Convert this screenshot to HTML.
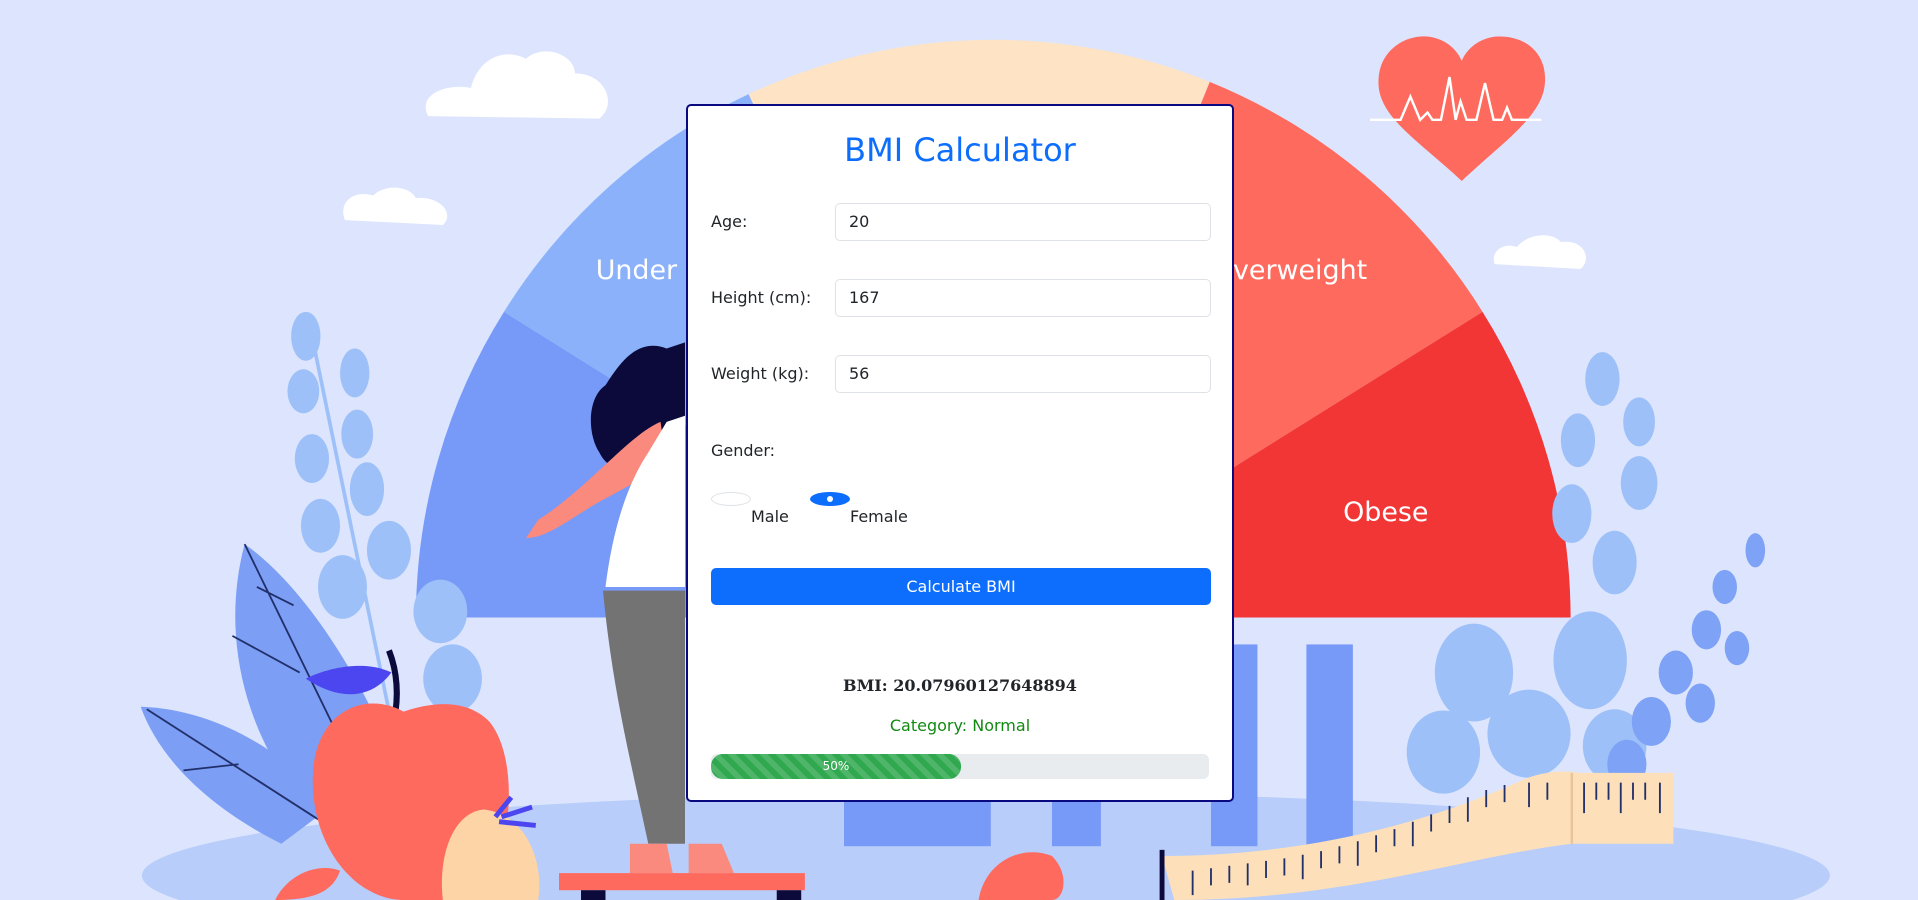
<!DOCTYPE html>
<html><head><meta charset="utf-8">
<style>
html,body{margin:0;padding:0;width:1918px;height:900px;overflow:hidden;background:#dce5fd;font-family:"DejaVu Sans",Verdana,sans-serif;position:relative;}
#bg{position:absolute;left:0;top:0;width:1918px;height:900px;display:block;}
.card{position:absolute;left:686px;top:104px;width:544px;height:694px;background:#fff;border:2px solid #0a0a80;border-radius:5px;}
.abs{position:absolute;}
h1{position:absolute;left:0;width:544px;top:24px;margin:0;text-align:center;font-weight:normal;font-size:32px;color:#0d6efd;line-height:40px;}
.lbl{position:absolute;left:23px;font-size:16px;color:#212529;line-height:20px;}
.inp{position:absolute;left:147px;border:1px solid #dee2e6;border-radius:5px;font-size:16px;color:#212529;line-height:36px;padding-left:13px;box-sizing:border-box;width:376px;height:38px;}
.radio{position:absolute;width:40px;height:14px;border-radius:50%;box-sizing:border-box;}
.btn{position:absolute;left:23px;top:462px;width:500px;height:37px;background:#0d6efd;border-radius:5px;color:#fff;text-align:center;font-size:16px;line-height:37px;}
.bmi{position:absolute;left:0;width:544px;text-align:center;top:570px;font-family:"DejaVu Serif",serif;font-weight:bold;font-size:16px;color:#212529;}
.cat{position:absolute;left:0;width:544px;text-align:center;top:610px;font-size:16px;color:#128a12;}
.prog{position:absolute;left:23px;top:648px;width:498px;height:25px;background:#e9ecef;border-radius:6px;overflow:hidden;}
.bar{width:250px;height:25px;border-radius:12px;background-color:#2fa84f;background-image:linear-gradient(45deg,rgba(255,255,255,.15) 25%,transparent 25%,transparent 50%,rgba(255,255,255,.15) 50%,rgba(255,255,255,.15) 75%,transparent 75%,transparent);background-size:16px 16px;color:#fff;font-size:12px;text-align:center;line-height:25px;}
</style></head><body>
<svg id="bg" viewBox="0 0 1568 736" preserveAspectRatio="none">
 <ellipse cx="806" cy="716" rx="690" ry="68" fill="#b8cdf9"/>
 <path d="M812,505 L340,505 A472,472 0 0 1 412,255 Z" fill="#7799f7"/>
 <path d="M812,505 L412,255 A472,472 0 0 1 612,77 Z" fill="#8ab1fa"/>
 <path d="M812,505 L612,77 A472,472 0 0 1 989,67 Z" fill="#fee3c4"/>
 <path d="M812,505 L989,67 A472,472 0 0 1 1212,255 Z" fill="#ff6a5e"/>
 <path d="M812,505 L1212,255 A472,472 0 0 1 1284,505 Z" fill="#f23535"/>
 <text x="487" y="228" fill="#fff" font-family="DejaVu Sans,sans-serif" font-size="22">Under</text>
 <text x="1008" y="228" fill="#fff" font-family="DejaVu Sans,sans-serif" font-size="22">verweight</text>
 <text x="1098" y="426" fill="#fff" font-family="DejaVu Sans,sans-serif" font-size="22">Obese</text>
 <rect x="690" y="527" width="120" height="165" fill="#7799f7"/>
 <rect x="860" y="527" width="40" height="165" fill="#7799f7"/>
 <rect x="990" y="527" width="38" height="165" fill="#7799f7"/>
 <rect x="1068" y="527" width="38" height="165" fill="#7799f7"/>
 <path d="M350,95 C340,75 370,68 385,72 C390,50 410,38 430,48 C445,35 470,45 470,60 C495,60 505,85 490,97 Z" fill="#fff"/>
 <path d="M282,180 C276,165 290,155 305,160 C315,150 335,152 340,162 C360,160 372,175 362,184 Z" fill="#fff"/>
 <path d="M1222,216 C1218,205 1230,198 1240,202 C1250,190 1270,190 1276,198 C1295,195 1302,212 1292,220 Z" fill="#fff"/>
 <path d="M1195,148 C1160,115 1125,95 1127,65 C1128,40 1150,28 1168,30 C1183,32 1192,42 1195,50 C1198,42 1207,32 1222,30 C1245,28 1265,42 1263,68 C1261,95 1230,115 1195,148 Z" fill="#ff6a5e"/>
 <polyline points="1120,98 1145,98 1153,79 1161,98 1167,92 1171,98 1178,98 1185,63 1190,98 1194,83 1199,98 1207,98 1214,68 1221,98 1228,98 1232,88 1236,98 1260,98" fill="none" stroke="#fff" stroke-width="2"/>
 <g fill="#9ec0f9">
  <ellipse cx="250" cy="275" rx="12" ry="20"/><ellipse cx="290" cy="305" rx="12" ry="20"/><ellipse cx="248" cy="320" rx="13" ry="18"/>
  <ellipse cx="292" cy="355" rx="13" ry="20"/><ellipse cx="255" cy="375" rx="14" ry="20"/><ellipse cx="300" cy="400" rx="14" ry="22"/>
  <ellipse cx="262" cy="430" rx="16" ry="22"/><ellipse cx="318" cy="450" rx="18" ry="24"/><ellipse cx="280" cy="480" rx="20" ry="26"/>
  <ellipse cx="360" cy="500" rx="22" ry="26"/><ellipse cx="370" cy="555" rx="24" ry="28"/>
 </g>
 <path d="M252,260 L330,640" stroke="#9ec0f9" stroke-width="3" fill="none"/>
 <path d="M200,445 C250,480 300,560 330,640 L250,660 C200,600 180,520 200,445 Z" fill="#7c9ef5"/>
 <path d="M200,445 L300,650 M190,520 L245,550 M210,480 L240,495" stroke="#22306a" stroke-width="1.5" fill="none"/>
 <path d="M115,578 C180,580 240,620 270,660 L230,690 C170,660 130,620 115,578 Z" fill="#7c9ef5"/>
 <path d="M120,580 L260,670 M150,630 L195,625" stroke="#22306a" stroke-width="1.5" fill="none"/>
 <path d="M250,555 C270,545 300,540 320,550 C305,570 280,575 250,555 Z" fill="#4c46f0"/>
 <path d="M318,532 C325,550 326,570 322,590" stroke="#0b0a3a" stroke-width="5" fill="none"/>
 <path d="M330,582 C300,565 260,580 256,630 C252,690 290,736 330,736 L390,736 C420,700 425,620 400,590 C380,570 350,575 330,582 Z" fill="#ff6a5e"/>
 <path d="M395,662 C370,665 358,700 362,736 L440,736 C445,705 430,665 395,662 Z" fill="#fdd4a5"/>
 <path d="M405,668 L418,652 M410,668 L435,660 M408,672 L438,675" stroke="#4c46f0" stroke-width="4"/>
 <path d="M225,736 C235,715 260,705 278,712 C272,730 255,736 225,736 Z" fill="#ff6a5e"/>
 <path d="M545,285 C520,275 505,300 495,315 C480,325 480,355 490,370 C500,390 515,380 525,365 L560,350 L560,280 Z" fill="#0b0a3a"/>
 <path d="M540,345 C515,355 480,400 440,425 L430,440 C450,440 470,420 500,405 L545,380 Z" fill="#f98a7d"/>
 <path d="M545,345 L560,340 L560,480 L495,480 C500,440 510,400 530,370 Z" fill="#fff"/>
 <path d="M493,483 L560,483 L560,690 L545,690 L530,690 C515,620 500,560 493,483 Z" fill="#737373"/>
 <path d="M515,690 L545,690 L550,714 L515,714 Z" fill="#f98a7d"/>
 <path d="M563,690 L590,690 L600,714 L563,714 Z" fill="#f98a7d"/>
 <rect x="457" y="714" width="201" height="14" fill="#ff6a5e"/>
 <rect x="475" y="728" width="20" height="8" fill="#0b0a3a"/><rect x="635" y="728" width="20" height="8" fill="#0b0a3a"/>
 <path d="M800,736 C805,705 835,690 860,700 C875,715 870,736 860,736 Z" fill="#ff6a5e"/>
 <g fill="#9ec0f9">
  <ellipse cx="1310" cy="310" rx="14" ry="22"/><ellipse cx="1340" cy="345" rx="13" ry="20"/><ellipse cx="1290" cy="360" rx="14" ry="22"/>
  <ellipse cx="1340" cy="395" rx="15" ry="22"/><ellipse cx="1285" cy="420" rx="16" ry="24"/><ellipse cx="1320" cy="460" rx="18" ry="26"/>
  <ellipse cx="1205" cy="550" rx="32" ry="40"/><ellipse cx="1300" cy="540" rx="30" ry="40"/><ellipse cx="1250" cy="600" rx="34" ry="36"/>
  <ellipse cx="1180" cy="615" rx="30" ry="34"/><ellipse cx="1320" cy="610" rx="26" ry="30"/>
 </g>
 <g fill="#7ea2f5">
  <ellipse cx="1435" cy="450" rx="8" ry="14"/><ellipse cx="1410" cy="480" rx="10" ry="14"/><ellipse cx="1395" cy="515" rx="12" ry="16"/>
  <ellipse cx="1370" cy="550" rx="14" ry="18"/><ellipse cx="1350" cy="590" rx="16" ry="20"/><ellipse cx="1330" cy="625" rx="16" ry="20"/>
  <ellipse cx="1420" cy="530" rx="10" ry="14"/><ellipse cx="1390" cy="575" rx="12" ry="16"/>
 </g>
 <path d="M950,700 C1050,700 1150,680 1240,640 C1260,630 1280,630 1290,632 L1368,632 L1368,690 L1285,690 C1200,700 1100,736 960,736 Z" fill="#fde0b9"/>
 <path d="M1285,632 L1285,690" stroke="#e8c49a" stroke-width="2"/>
 <g stroke="#22306a" stroke-width="1.5">
  <path d="M975,712 v20 M990,710 v14 M1005,708 v14 M1020,706 v18 M1035,704 v14 M1050,702 v14 M1065,699 v20 M1080,696 v14 M1095,692 v14 M1110,688 v20 M1125,683 v14 M1140,678 v14 M1155,672 v20 M1170,666 v14 M1185,659 v14 M1200,652 v20 M1215,646 v14 M1230,642 v14 M1250,640 v20 M1265,640 v14"/>
  <path d="M1295,640 v25 M1305,640 v14 M1315,640 v14 M1325,640 v25 M1335,640 v14 M1345,640 v14 M1357,640 v25"/>
 </g>
 <path d="M950,695 L950,736" stroke="#0b0a3a" stroke-width="4"/>
</svg>

<div class="card">
 <h1>BMI Calculator</h1>
 <div class="lbl" style="top:106px">Age:</div>
 <div class="inp" style="top:97px">20</div>
 <div class="lbl" style="top:182px">Height (cm):</div>
 <div class="inp" style="top:173px">167</div>
 <div class="lbl" style="top:258px">Weight (kg):</div>
 <div class="inp" style="top:249px">56</div>
 <div class="lbl" style="top:335px">Gender:</div>
 <div class="radio" style="left:23px;top:386px;border:1px solid #dee2e6;background:#fff"></div>
 <div class="lbl" style="left:63px;top:401px">Male</div>
 <div class="radio" style="left:122px;top:386px;background:#0d6efd"></div>
 <div class="abs" style="left:139px;top:390px;width:6px;height:6px;border-radius:50%;background:#fff"></div>
 <div class="lbl" style="left:162px;top:401px">Female</div>
 <div class="btn">Calculate BMI</div>
 <div class="bmi">BMI: 20.07960127648894</div>
 <div class="cat">Category: Normal</div>
 <div class="prog"><div class="bar">50%</div></div>
</div>
</body></html>
